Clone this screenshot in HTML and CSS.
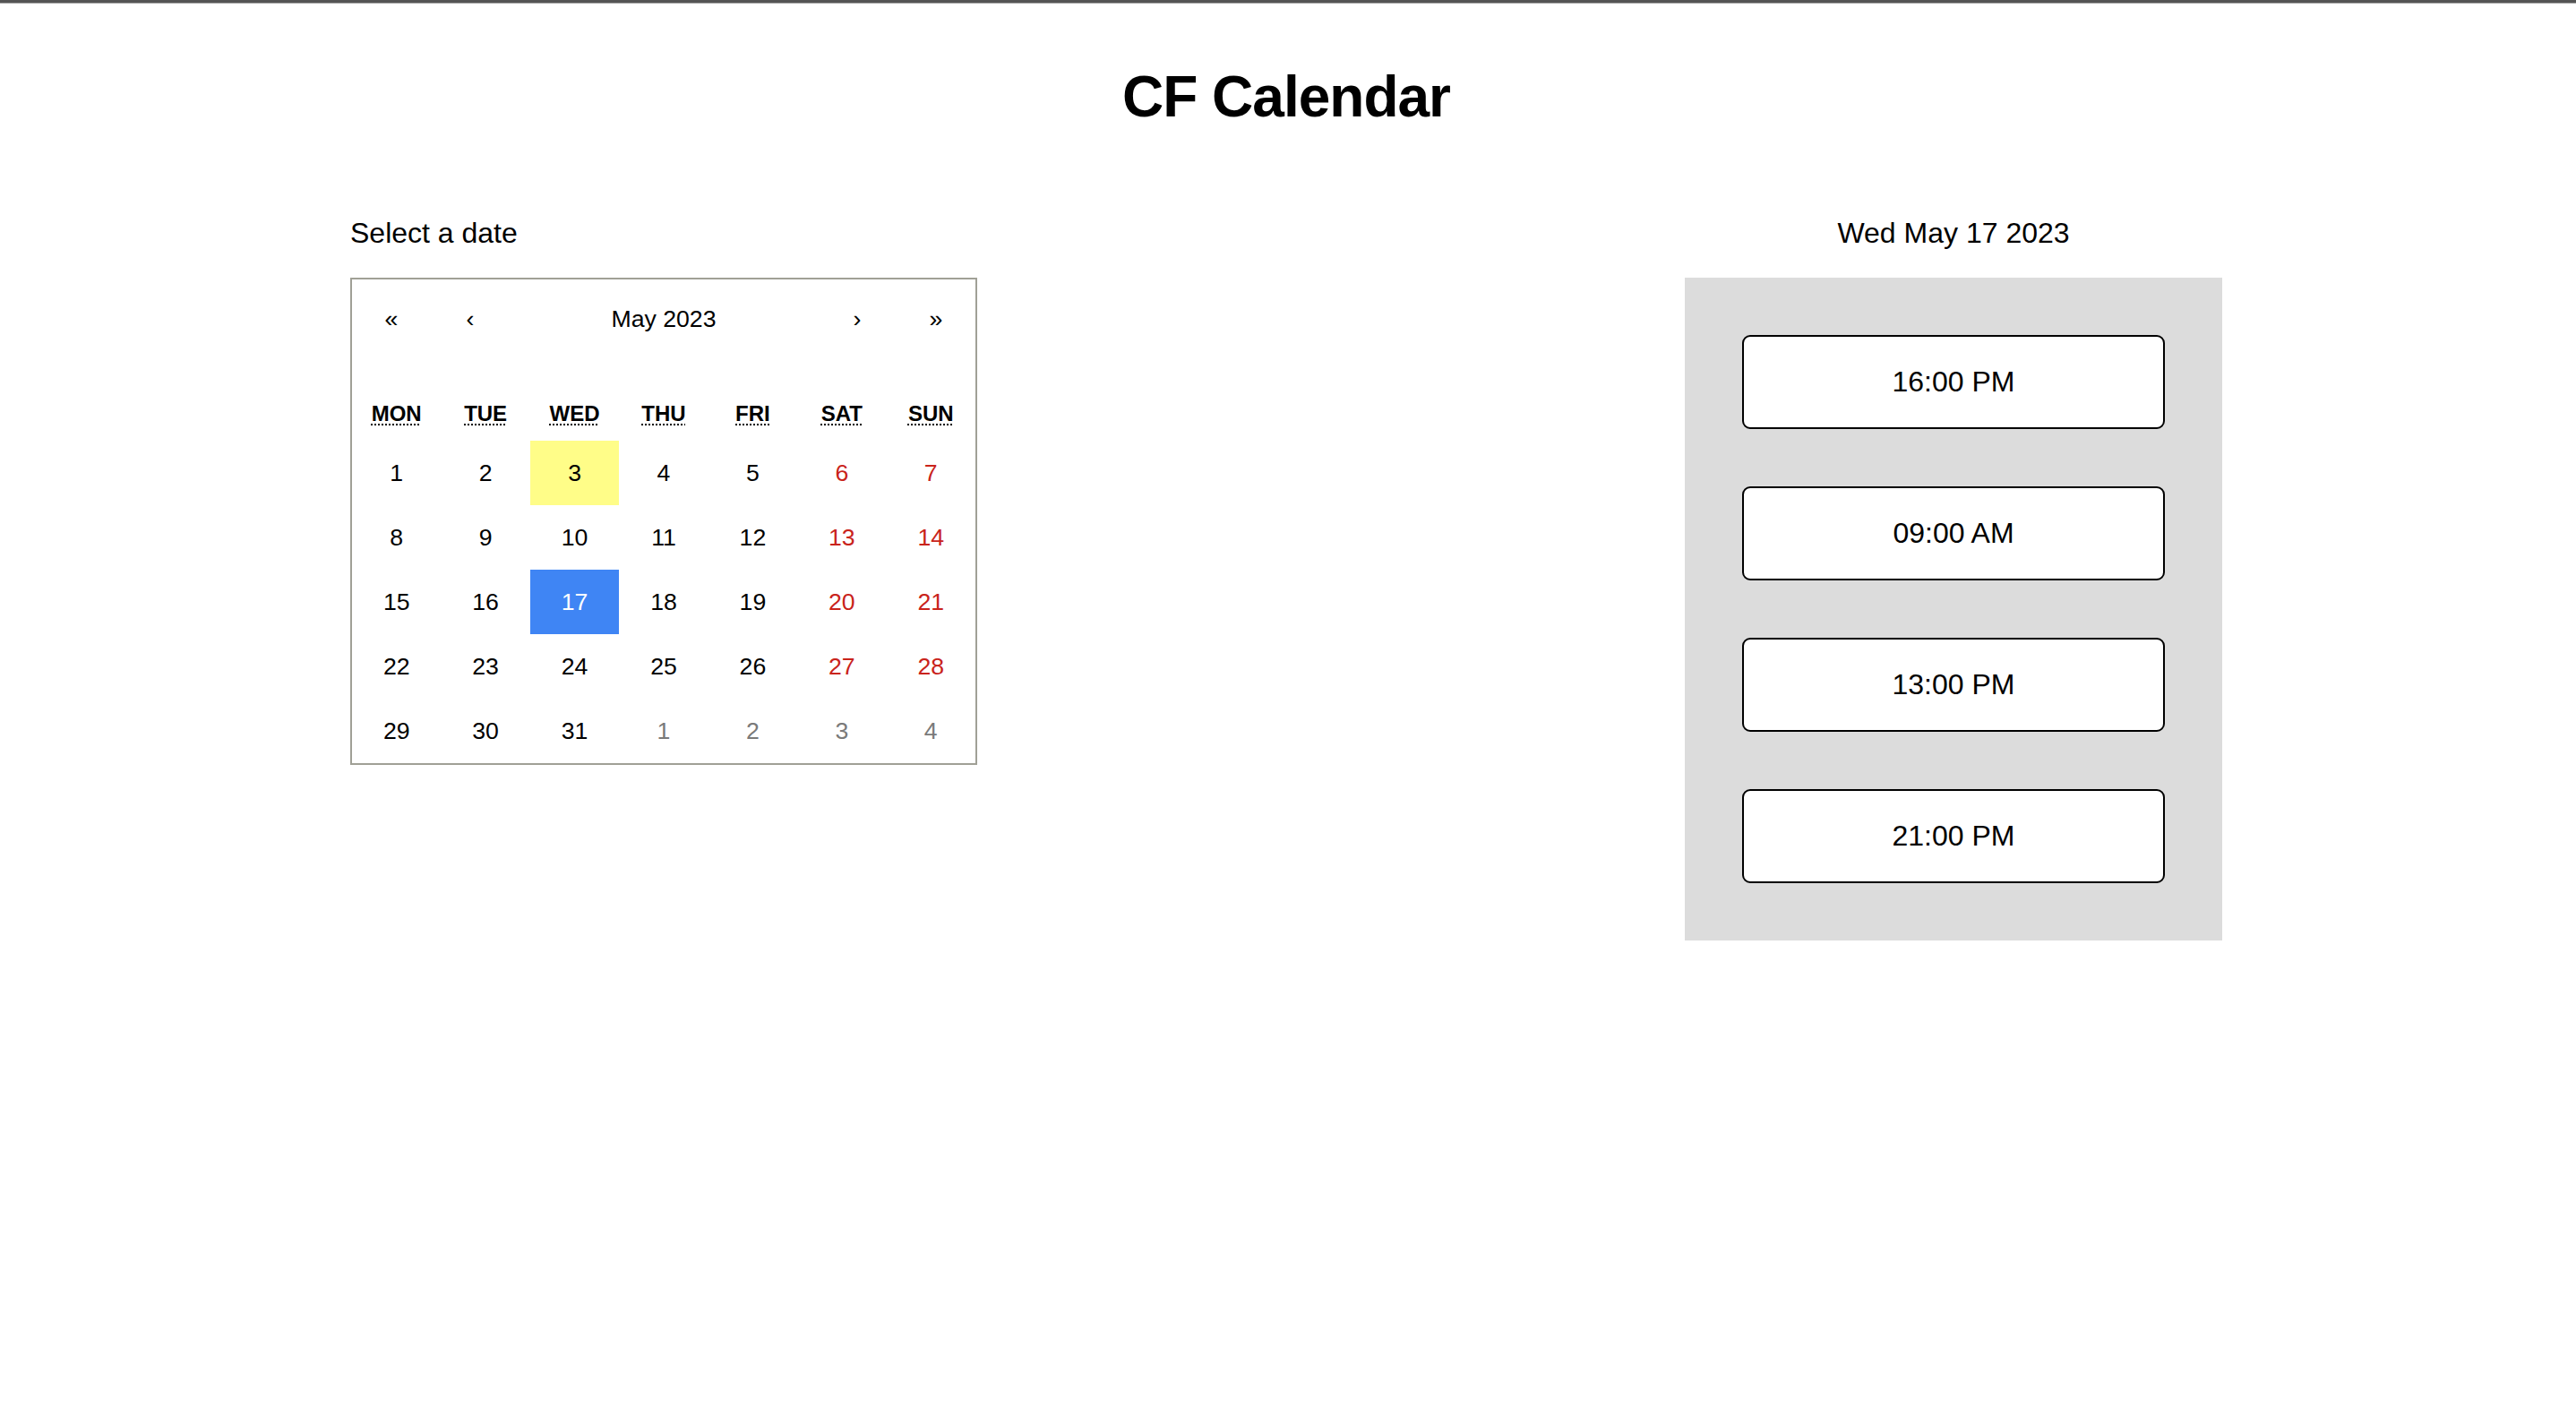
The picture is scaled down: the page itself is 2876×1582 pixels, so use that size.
FILE: index.html
```html
<!DOCTYPE html>
<html lang="en">
<head>
<meta charset="utf-8">
<title>CF Calendar</title>
<link rel="stylesheet" href="styles.css">
</head>
<body>
<div class="topbar"></div>
<div class="page">
  <h1 class="title">CF Calendar</h1>
  <div class="row">
    <section class="col-left">
      <p class="label">Select a date</p>
      <div class="calendar">
        <div class="nav">
          <button class="nav-arrow">«</button>
          <button class="nav-arrow">‹</button>
          <button class="nav-label">May 2023</button>
          <button class="nav-arrow">›</button>
          <button class="nav-arrow">»</button>
        </div>
        <div class="weekdays">
          <div class="weekday"><abbr title="Monday">Mon</abbr></div>
          <div class="weekday"><abbr title="Tuesday">Tue</abbr></div>
          <div class="weekday"><abbr title="Wednesday">Wed</abbr></div>
          <div class="weekday"><abbr title="Thursday">Thu</abbr></div>
          <div class="weekday"><abbr title="Friday">Fri</abbr></div>
          <div class="weekday"><abbr title="Saturday">Sat</abbr></div>
          <div class="weekday"><abbr title="Sunday">Sun</abbr></div>
        </div>
        <div class="days">
          <button class="day">1</button>
          <button class="day">2</button>
          <button class="day day-now">3</button>
          <button class="day">4</button>
          <button class="day">5</button>
          <button class="day day-weekend">6</button>
          <button class="day day-weekend">7</button>
          <button class="day">8</button>
          <button class="day">9</button>
          <button class="day">10</button>
          <button class="day">11</button>
          <button class="day">12</button>
          <button class="day day-weekend">13</button>
          <button class="day day-weekend">14</button>
          <button class="day">15</button>
          <button class="day">16</button>
          <button class="day day-active">17</button>
          <button class="day">18</button>
          <button class="day">19</button>
          <button class="day day-weekend">20</button>
          <button class="day day-weekend">21</button>
          <button class="day">22</button>
          <button class="day">23</button>
          <button class="day">24</button>
          <button class="day">25</button>
          <button class="day">26</button>
          <button class="day day-weekend">27</button>
          <button class="day day-weekend">28</button>
          <button class="day">29</button>
          <button class="day">30</button>
          <button class="day">31</button>
          <button class="day day-neighbor">1</button>
          <button class="day day-neighbor">2</button>
          <button class="day day-neighbor">3</button>
          <button class="day day-neighbor">4</button>
        </div>
      </div>
    </section>
    <section class="col-right">
      <p class="label label-center">Wed May 17 2023</p>
      <div class="slots">
        <button class="slot">16:00 PM</button>
        <button class="slot">09:00 AM</button>
        <button class="slot">13:00 PM</button>
        <button class="slot">21:00 PM</button>
      </div>
    </section>
  </div>
</div>
</body>
</html>
```
FILE: styles.css
```css
* {
  box-sizing: border-box;
}

html, body {
  margin: 0;
  padding: 0;
  background: #ffffff;
}

body {
  font-family: "Liberation Sans", Arial, Helvetica, sans-serif;
  font-size: 32px;
  color: #000000;
}

.topbar {
  height: 4px;
  background: #545454;
  border-bottom: 1px solid #a3a3a3;
}

.page {
  padding: 67px 4px 0 0;
}

.title {
  margin: 0 0 97px 0;
  text-align: center;
  font-size: 64px;
  line-height: 74px;
  font-weight: bold;
  letter-spacing: -1px;
}

.row {
  width: 2090px;
  margin: 0 auto;
  display: flex;
  justify-content: space-between;
  align-items: flex-start;
}

.col-left {
  width: 700px;
}

.col-right {
  width: 600px;
}

.label {
  margin: 0 0 31px 0;
  font-size: 32px;
  line-height: 37px;
  font-weight: normal;
}

.label-center {
  text-align: center;
}

/* Calendar */
.calendar {
  width: 700px;
  border: 2px solid #a0a096;
  background: #ffffff;
  line-height: 36px;
}

.calendar button {
  margin: 0;
  border: 0;
  outline: none;
  background: none;
  font-family: "Liberation Sans", Arial, Helvetica, sans-serif;
  font-size: 26.667px;
  color: #000000;
  padding: 0;
}

.nav {
  display: flex;
  height: 88px;
  margin-bottom: 32px;
}

.nav-arrow {
  min-width: 88px;
}

.nav-label {
  flex-grow: 1;
}

.weekdays {
  display: grid;
  grid-template-columns: repeat(7, 1fr);
  text-align: center;
  text-transform: uppercase;
  font-weight: bold;
  font-size: 24px;
}

.weekday {
  padding: 12px;
  line-height: 36px;
}

.weekday abbr {
  text-decoration: underline dotted;
  text-decoration-thickness: 2px;
  text-underline-offset: 3px;
}

.days {
  display: grid;
  grid-template-columns: repeat(7, 1fr);
}

.calendar .day {
  padding: 20px 13.333px;
  line-height: 32px;
  text-align: center;
}

.calendar .day-weekend {
  color: #c9231b;
}

.calendar .day-neighbor {
  color: #7a7a7a;
}

.calendar .day-now {
  background: #fffd88;
}

.calendar .day-active {
  background: #3f85f4;
  color: #ffffff;
}

/* Slots */
.slots {
  display: flex;
  flex-direction: column;
  background: #dcdcdc;
  padding: 32px;
}

.slot {
  margin: 32px;
  height: 105px;
  background: #ffffff;
  border: 2px solid #000000;
  border-radius: 9px;
  font-family: "Liberation Sans", Arial, Helvetica, sans-serif;
  font-size: 32px;
  color: #000000;
  padding: 0;
}
```
